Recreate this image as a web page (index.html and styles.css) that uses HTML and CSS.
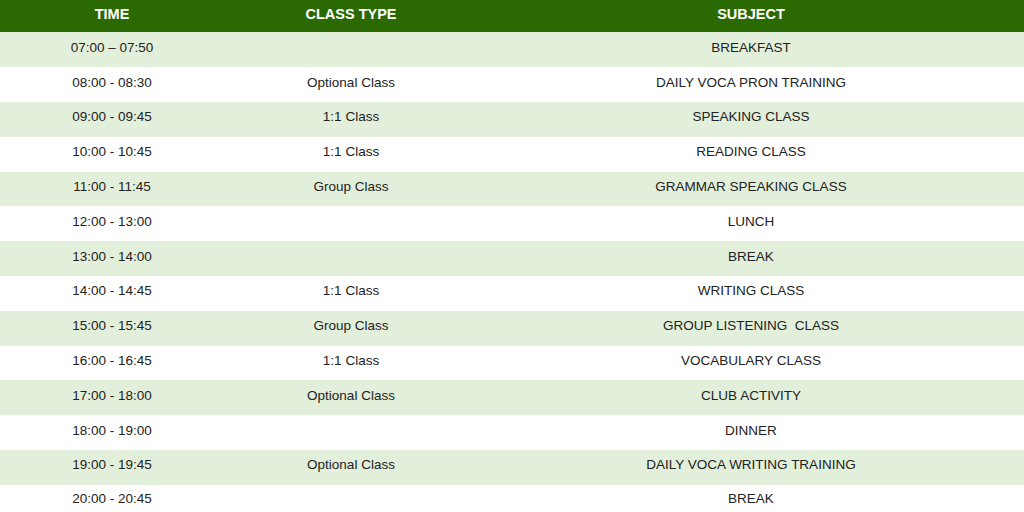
FILE: index.html
```html
<!DOCTYPE html>
<html>
<head>
<meta charset="utf-8">
<link rel="stylesheet" href="styles.css">
</head>
<body>
<table class="schedule">
  <colgroup>
    <col class="c-time"><col class="c-type"><col class="c-subj">
  </colgroup>
  <thead>
    <tr><th>TIME</th><th>CLASS TYPE</th><th>SUBJECT</th></tr>
  </thead>
  <tbody>
    <tr><td>07:00 – 07:50</td><td></td><td>BREAKFAST</td></tr>
    <tr><td>08:00 - 08:30</td><td>Optional Class</td><td>DAILY VOCA PRON TRAINING</td></tr>
    <tr><td>09:00 - 09:45</td><td>1:1 Class</td><td>SPEAKING CLASS</td></tr>
    <tr><td>10:00 - 10:45</td><td>1:1 Class</td><td>READING CLASS</td></tr>
    <tr><td>11:00 - 11:45</td><td>Group Class</td><td>GRAMMAR SPEAKING CLASS</td></tr>
    <tr><td>12:00 - 13:00</td><td></td><td>LUNCH</td></tr>
    <tr><td>13:00 - 14:00</td><td></td><td>BREAK</td></tr>
    <tr><td>14:00 - 14:45</td><td>1:1 Class</td><td>WRITING CLASS</td></tr>
    <tr><td>15:00 - 15:45</td><td>Group Class</td><td>GROUP LISTENING&nbsp; CLASS</td></tr>
    <tr><td>16:00 - 16:45</td><td>1:1 Class</td><td>VOCABULARY CLASS</td></tr>
    <tr><td>17:00 - 18:00</td><td>Optional Class</td><td>CLUB ACTIVITY</td></tr>
    <tr><td>18:00 - 19:00</td><td></td><td>DINNER</td></tr>
    <tr><td>19:00 - 19:45</td><td>Optional Class</td><td>DAILY VOCA WRITING TRAINING</td></tr>
    <tr class="last"><td>20:00 - 20:45</td><td></td><td>BREAK</td></tr>
  </tbody>
</table>
</body>
</html>
```
FILE: styles.css
```css
html, body {
  margin: 0;
  padding: 0;
  background: #ffffff;
  overflow: hidden;
}
body {
  width: 1024px;
  height: 512px;
  font-family: "Liberation Sans", Arial, sans-serif;
}
.schedule {
  width: 1024px;
  border-collapse: collapse;
  table-layout: fixed;
}
.c-time { width: 224px; }
.c-type { width: 254px; }
.c-subj { width: 546px; }
.schedule th {
  background: #2b6a02;
  color: #ffffff;
  font-weight: bold;
  font-size: 14.5px;
  height: 32.4px;
  padding: 0 0 4px 0;
  box-sizing: border-box;
  text-align: center;
  vertical-align: middle;
}
.schedule td {
  font-size: 13.5px;
  color: #222222;
  height: 34.8px;
  padding: 0 0 5px 0;
  box-sizing: border-box;
  text-align: center;
  vertical-align: middle;
  white-space: pre;
}
.schedule tbody tr:nth-child(odd) td {
  background: #e2efda;
}
.schedule tr.last td {
  height: 27.6px;
  padding: 0 0 1px 0;
}
```
